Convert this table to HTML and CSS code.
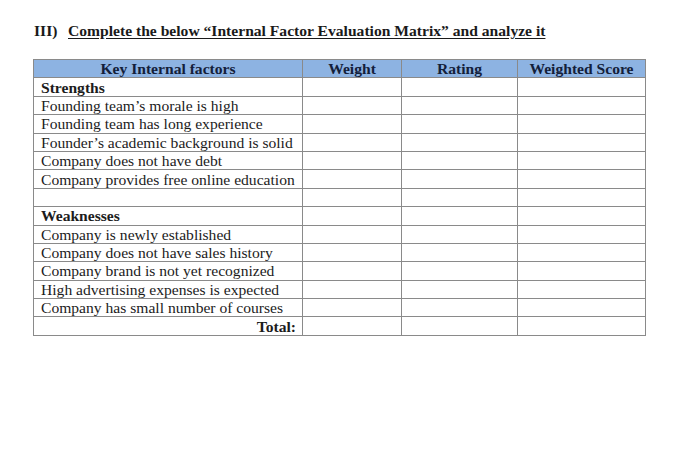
FILE: index.html
```html
<!DOCTYPE html>
<html>
<head>
<meta charset="utf-8">
<link rel="stylesheet" href="styles.css">
</head>
<body>
<div class="page">
  <h1 class="title"><span class="num">III)</span><span class="u">Complete the below “Internal Factor Evaluation Matrix” and analyze it</span></h1>
  <table class="ife">
    <colgroup>
      <col class="c1"><col class="c2"><col class="c3"><col class="c4">
    </colgroup>
    <thead>
      <tr><th>Key Internal factors</th><th>Weight</th><th>Rating</th><th>Weighted Score</th></tr>
    </thead>
    <tbody>
      <tr><td class="sec">Strengths</td><td></td><td></td><td></td></tr>
      <tr><td>Founding team’s morale is high</td><td></td><td></td><td></td></tr>
      <tr><td>Founding team has long experience</td><td></td><td></td><td></td></tr>
      <tr><td>Founder’s academic background is solid</td><td></td><td></td><td></td></tr>
      <tr><td>Company does not have debt</td><td></td><td></td><td></td></tr>
      <tr><td>Company provides free online education</td><td></td><td></td><td></td></tr>
      <tr><td></td><td></td><td></td><td></td></tr>
      <tr><td class="sec">Weaknesses</td><td></td><td></td><td></td></tr>
      <tr><td>Company is newly established</td><td></td><td></td><td></td></tr>
      <tr><td>Company does not have sales history</td><td></td><td></td><td></td></tr>
      <tr><td>Company brand is not yet recognized</td><td></td><td></td><td></td></tr>
      <tr><td>High advertising expenses is expected</td><td></td><td></td><td></td></tr>
      <tr><td>Company has small number of courses</td><td></td><td></td><td></td></tr>
      <tr><td class="total">Total:</td><td></td><td></td><td></td></tr>
    </tbody>
  </table>
</div>
</body>
</html>
```
FILE: styles.css
```css
html, body {
  margin: 0;
  padding: 0;
  background: #ffffff;
}
.page {
  padding: 22px 0 0 34px;
  font-family: "Liberation Serif", "Times New Roman", serif;
  color: #1c1c1c;
}
.title {
  margin: 0 0 19px 0;
  font-size: 15.6px;
  font-weight: bold;
  line-height: 18px;
  color: #1a1a1a;
}
.title .num {
  display: inline-block;
  width: 34px;
}
.title .u {
  text-decoration: underline;
  text-underline-offset: 2px;
}
.ife {
  margin-left: -1px;
  border-collapse: collapse;
  table-layout: fixed;
  width: 612px;
  font-size: 15.6px;
  border: 1px solid #707070;
}
.c1 { width: 269px; }
.c2 { width: 99px; }
.c3 { width: 116px; }
.c4 { width: 128px; }
.ife th, .ife td {
  border: 1px solid #8a8a8a;
  height: 17.4px;
  padding: 0;
  line-height: 17px;
  white-space: nowrap;
  overflow: hidden;
}
.ife th {
  background: #8db3e2;
  color: #13203a;
  font-weight: bold;
  text-align: center;
}
.ife td:first-child {
  padding-left: 7px;
}
.ife td.sec {
  font-weight: bold;
}
.ife td.total {
  font-weight: bold;
  text-align: right;
  padding-right: 6px;
}
```
